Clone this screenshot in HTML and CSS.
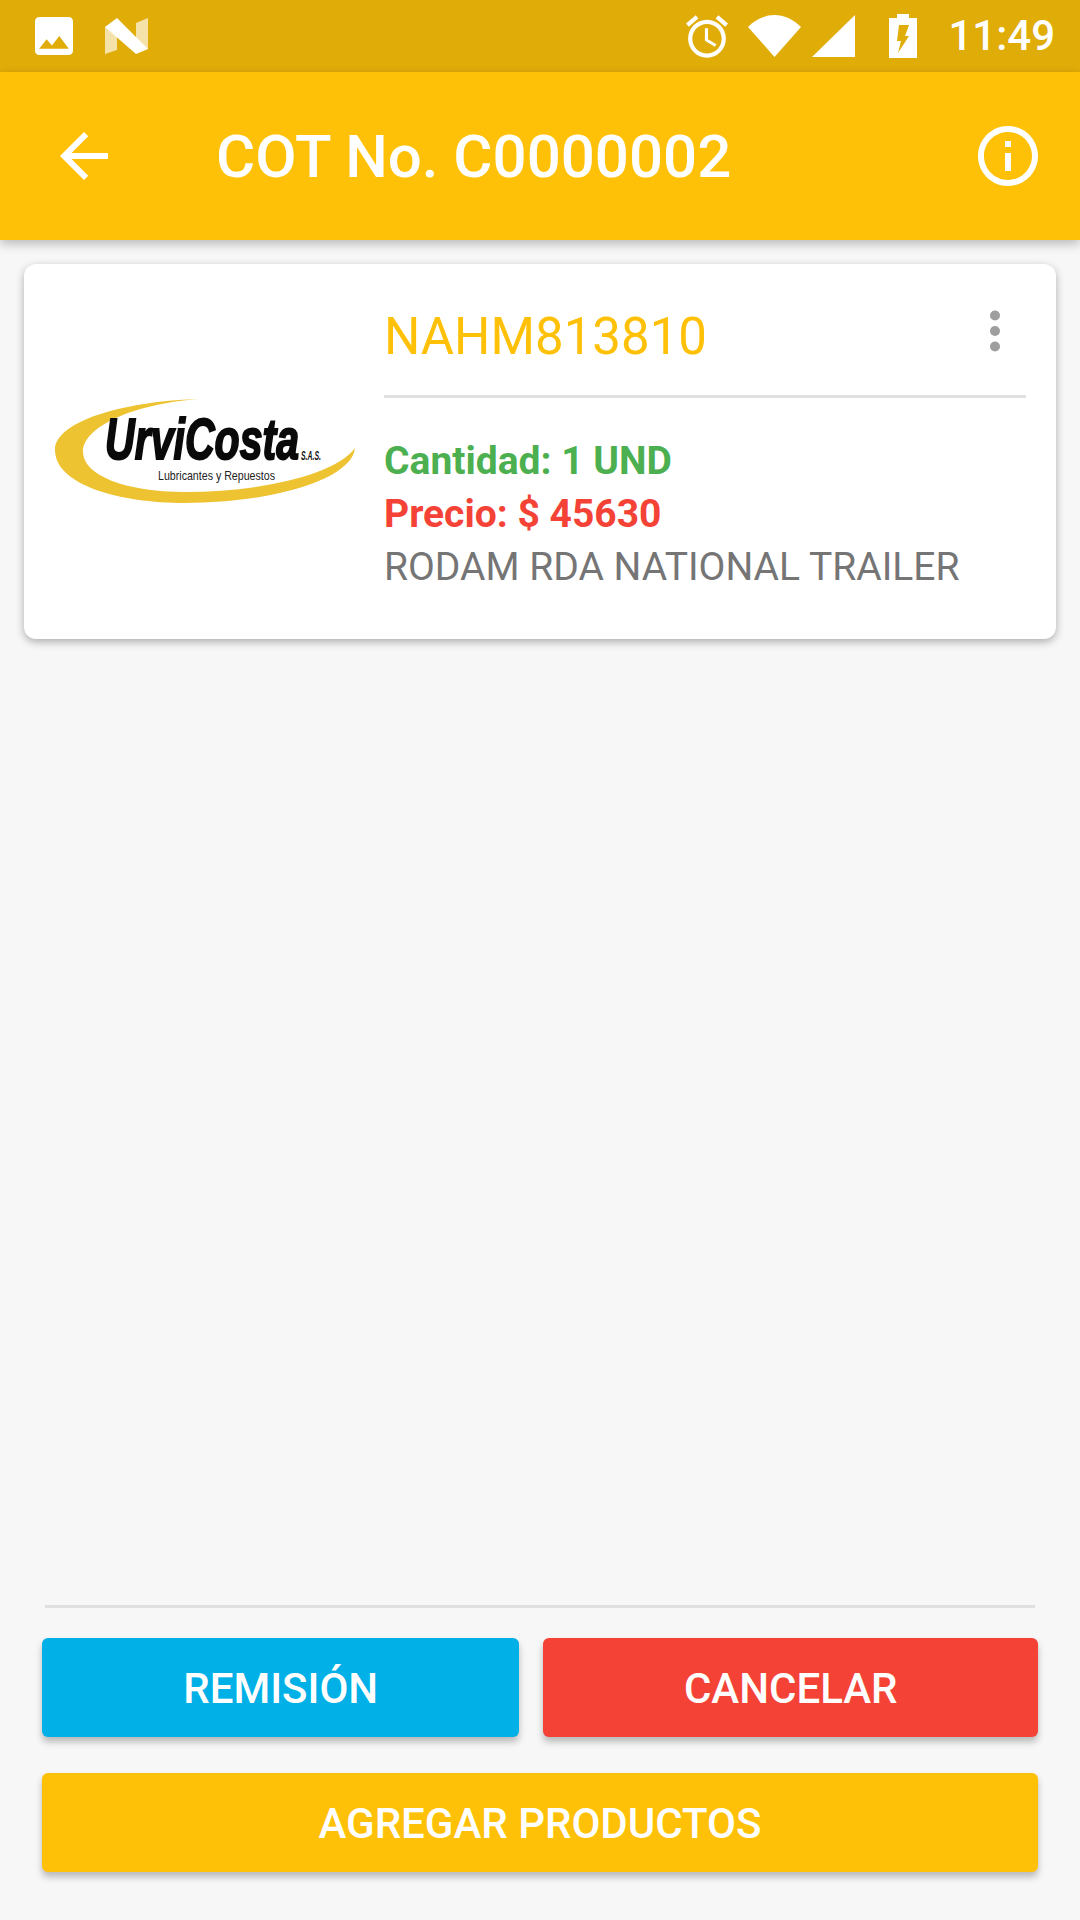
FILE: index.html
```html
<!DOCTYPE html>
<html lang="es">

<head>
    <meta charset="UTF-8">
    <meta name="viewport" content="width=device-width, initial-scale=1.0">
    <title>Cotización</title>
    <link rel="stylesheet" href="styles.css">
</head>

<body>
    <div class="status-bar">
        <svg class="icon-image" viewBox="3 3 18 18"><path d="M21 19V5c0-1.1-.9-2-2-2H5c-1.1 0-2 .9-2 2v14c0 1.1.9 2 2 2h14c1.1 0 2-.9 2-2zM8.5 13.5l2.5 3.01L14.5 12l4.5 6H5l3.5-4.5z" fill="#fff" fill-rule="evenodd"/></svg>
        <svg class="icon-n" viewBox="0 0 43 36">
            <path d="M0 9 L12 5 L12 32 L0 36Z M31 5 L43 0 L43 31 L31 33Z" fill="#fff" opacity="0.65"/>
            <path d="M0 9 L12 0 L43 31 L31 36Z" fill="#fff"/>
        </svg>
        <div class="status-right">
            <svg class="icon-alarm" viewBox="2 1.86 20 20.14"><path d="M22 5.72l-4.6-3.86-1.29 1.53 4.6 3.86L22 5.72zM7.88 3.39L6.6 1.86 2 5.71l1.29 1.53 4.59-3.85zM12.5 8H11v6l4.75 2.85.75-1.23-4-2.37V8zM12 4c-4.97 0-9 4.03-9 9s4.02 9 9 9c4.97 0 9-4.03 9-9s-4.03-9-9-9zm0 16c-3.87 0-7-3.13-7-7s3.13-7 7-7 7 3.13 7 7-3.13 7-7 7z" fill="#fff"/></svg>
            <svg class="icon-wifi" viewBox="0 0 53 42"><path d="M0 12 C16 -4 37 -4 53 12 L26.5 42Z" fill="#fff"/></svg>
            <svg class="icon-signal" viewBox="0 0 43 42"><path d="M0 42 L43 0 L43 42Z" fill="#fff"/></svg>
            <svg class="icon-battery" viewBox="0 0 28 44">
                <path d="M8 0 H20 V4 H28 V44 H0 V4 H8Z" fill="#fff"/>
                <path d="M10 11 H20 L16 22 H20 L9 39 L12 27 H8Z" fill="#e0ac08"/>
            </svg>
            <span class="clock">11:49</span>
        </div>
    </div>

    <header class="app-bar">
        <svg class="bar-icon" viewBox="0 0 24 24"><path d="M20 11H7.83l5.59-5.59L12 4l-8 8 8 8 1.41-1.41L7.83 13H20v-2z" fill="#fff"/></svg>
        <h1>COT No. C0000002</h1>
        <svg class="bar-icon" viewBox="0 0 24 24"><path d="M11 7h2v2h-2zm0 4h2v6h-2zm1-9C6.48 2 2 6.48 2 12s4.48 10 10 10 10-4.48 10-10S17.52 2 12 2zm0 18c-4.41 0-8-3.59-8-8s3.59-8 8-8 8 3.59 8 8-3.59 8-8 8z" fill="#fff"/></svg>
    </header>

    <main class="content">
        <div class="card">
            <svg class="logo" viewBox="4 2 360 160">
                <path d="M183 29 C110 30 35 50 35 80 C35 115 100 133 165 133 C250 133 332 110 335 78 C315 105 240 122 165 122 C105 122 63 105 63 82 C63 55 120 32 183 29Z" fill="#eec332"/>
                <text class="logo-name" x="85" y="89" textLength="194" lengthAdjust="spacingAndGlyphs">UrviCosta</text>
                <text class="logo-sas" x="281" y="90" textLength="20" lengthAdjust="spacingAndGlyphs">S.A.S.</text>
                <text class="logo-sub" x="138" y="110" textLength="117" lengthAdjust="spacingAndGlyphs">Lubricantes y Repuestos</text>
            </svg>
            <div class="card-body">
                <div class="card-head">
                    <span class="code">NAHM813810</span>
                    <svg class="dots" viewBox="0 0 12 42">
                        <circle cx="6" cy="5.5" r="5" fill="#9e9e9e"/>
                        <circle cx="6" cy="21" r="5" fill="#9e9e9e"/>
                        <circle cx="6" cy="36.5" r="5" fill="#9e9e9e"/>
                    </svg>
                </div>
                <div class="line qty">Cantidad: 1 UND</div>
                <div class="line price">Precio: $ 45630</div>
                <div class="line desc">RODAM RDA NATIONAL TRAILER</div>
            </div>
        </div>
    </main>

    <footer class="actions">
        <div class="actions-line"></div>
        <div class="btn-row">
            <button class="btn btn-blue">REMISIÓN</button>
            <button class="btn btn-red">CANCELAR</button>
        </div>
        <button class="btn btn-amber">AGREGAR PRODUCTOS</button>
    </footer>
</body>

</html>
```

FILE: styles.css
```css
html,
body {
    height: 100%;
}

body {
    display: flex;
    flex-direction: column;
    height: 1920px;
    margin: 0;
    font-family: Roboto, "Liberation Sans", sans-serif;
    background-color: #f7f7f7;
    overflow: hidden;
}

.status-bar {
    display: flex;
    align-items: center;
    height: 72px;
    padding-left: 35px;
    background-color: #e0ac08;
}

.icon-image {
    width: 38px;
    height: 38px;
    margin-right: 32px;
}

.icon-n {
    width: 43px;
    height: 36px;
}

.status-right {
    display: flex;
    align-items: center;
    margin-left: auto;
    padding-right: 25px;
}

.icon-alarm {
    width: 42px;
    height: 43px;
    margin-right: 20px;
}

.icon-wifi {
    width: 53px;
    height: 42px;
    margin-right: 11px;
}

.icon-signal {
    width: 43px;
    height: 42px;
    margin-right: 34px;
}

.icon-battery {
    width: 28px;
    height: 44px;
    margin-right: 31px;
}

.clock {
    color: #fff;
    font-size: 42px;
    font-weight: 500;
    line-height: 72px;
}

.app-bar {
    display: flex;
    align-items: center;
    flex-shrink: 0;
    height: 168px;
    padding: 0 36px 0 48px;
    background-color: #ffc107;
    box-shadow: 0 4px 10px rgba(0, 0, 0, 0.25);
}

.bar-icon {
    width: 72px;
    height: 72px;
}

.app-bar h1 {
    flex: 1;
    margin: 0 0 0 96px;
    color: #fff;
    font-size: 60px;
    font-weight: 500;
}

.content {
    flex: 1;
    padding: 24px;
}

.card {
    display: flex;
    align-items: center;
    height: 375px;
    background-color: #fff;
    border-radius: 12px;
    box-shadow: 0 3px 8px rgba(0, 0, 0, 0.3);
}

.logo {
    flex-shrink: 0;
    width: 360px;
    height: 160px;
}

.logo-name {
    font-family: "Liberation Sans", sans-serif;
    font-size: 58px;
    font-weight: 700;
    font-style: italic;
    fill: #0a0a0a;
    stroke: #0a0a0a;
    stroke-width: 2px;
}

.logo-sas {
    font-family: "Liberation Sans", sans-serif;
    font-size: 12px;
    font-weight: 700;
    font-style: italic;
    fill: #111;
}

.logo-sub {
    font-family: "Liberation Sans", sans-serif;
    font-size: 13px;
    fill: #222;
}

.card-body {
    flex: 1;
    align-self: stretch;
    padding-right: 30px;
}

.card-head {
    display: flex;
    align-items: flex-start;
    justify-content: space-between;
    height: 134px;
    border-bottom: 3px solid #e0e0e0;
    box-sizing: border-box;
}

.code {
    margin-top: 43px;
    color: #ffc107;
    font-size: 51px;
    line-height: 60px;
}

.dots {
    width: 12px;
    height: 42px;
    margin: 46px 25px 0 0;
}

.line {
    font-size: 39px;
    line-height: 53px;
}

.qty {
    margin-top: 37px;
    color: #4caf50;
    font-weight: 700;
}

.price {
    color: #f44336;
    font-weight: 700;
}

.desc {
    color: #757575;
}

.actions {
    display: flex;
    flex-direction: column;
    padding: 0 42px 48px 42px;
}

.actions-line {
    height: 3px;
    margin: 0 3px 30px 3px;
    background-color: #e0e0e0;
}

.btn-row {
    display: grid;
    grid-template-columns: 477fr 494fr;
    gap: 24px;
    margin-bottom: 36px;
}

.btn {
    height: 99px;
    padding: 2px 0 0;
    color: #fff;
    font-family: inherit;
    font-size: 42px;
    font-weight: 500;
    border: none;
    border-radius: 6px;
    box-shadow: 0 5px 7px rgba(0, 0, 0, 0.25);
}

.btn-blue {
    background-color: #00b0e6;
}

.btn-red {
    background-color: #f44336;
}

.btn-amber {
    background-color: #ffc107;
}
```
